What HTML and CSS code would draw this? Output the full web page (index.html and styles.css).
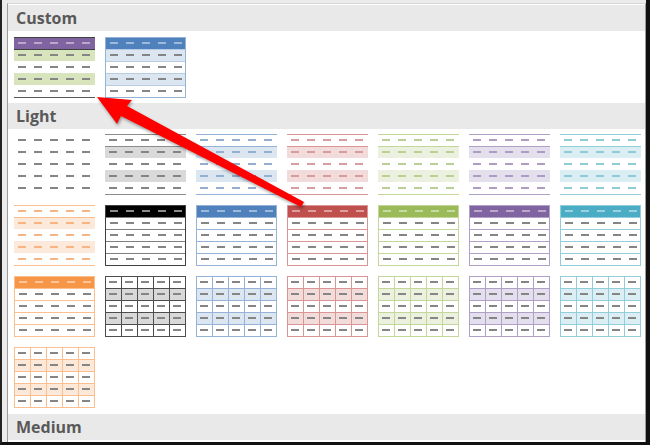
FILE: index.html
```html
<!DOCTYPE html>
<html>
<head>
<meta charset="utf-8">
<link rel="stylesheet" href="styles.css">
</head>
<body>
<div class="screen">
  <div class="panel">
    <div class="hdr hdr-first">Custom</div>
    <div class="gallery gallery-custom">
      <div class="t custA"><div class="r"></div><div class="r"></div><div class="r"></div><div class="r"></div><div class="r"></div></div>
      <div class="t custB"><div class="r"></div><div class="r"></div><div class="r"></div><div class="r"></div><div class="r"></div></div>
    </div>
    <div class="hdr">Light</div>
    <div class="gallery gallery-light">
      <div class="t plain"><div class="r"></div><div class="r"></div><div class="r"></div><div class="r"></div><div class="r"></div></div>
      <div class="t band gray"><div class="r"></div><div class="r"></div><div class="r"></div><div class="r"></div><div class="r"></div></div>
      <div class="t band blue"><div class="r"></div><div class="r"></div><div class="r"></div><div class="r"></div><div class="r"></div></div>
      <div class="t band red"><div class="r"></div><div class="r"></div><div class="r"></div><div class="r"></div><div class="r"></div></div>
      <div class="t band green"><div class="r"></div><div class="r"></div><div class="r"></div><div class="r"></div><div class="r"></div></div>
      <div class="t band purple"><div class="r"></div><div class="r"></div><div class="r"></div><div class="r"></div><div class="r"></div></div>
      <div class="t band teal"><div class="r"></div><div class="r"></div><div class="r"></div><div class="r"></div><div class="r"></div></div>

      <div class="t band orange"><div class="r"></div><div class="r"></div><div class="r"></div><div class="r"></div><div class="r"></div></div>
      <div class="t lines black"><div class="r"></div><div class="r"></div><div class="r"></div><div class="r"></div><div class="r"></div></div>
      <div class="t lines blue"><div class="r"></div><div class="r"></div><div class="r"></div><div class="r"></div><div class="r"></div></div>
      <div class="t lines red"><div class="r"></div><div class="r"></div><div class="r"></div><div class="r"></div><div class="r"></div></div>
      <div class="t lines green"><div class="r"></div><div class="r"></div><div class="r"></div><div class="r"></div><div class="r"></div></div>
      <div class="t lines purple"><div class="r"></div><div class="r"></div><div class="r"></div><div class="r"></div><div class="r"></div></div>
      <div class="t lines teal"><div class="r"></div><div class="r"></div><div class="r"></div><div class="r"></div><div class="r"></div></div>

      <div class="t lines orange"><div class="r"></div><div class="r"></div><div class="r"></div><div class="r"></div><div class="r"></div></div>
      <div class="t grid gray"><div class="r"></div><div class="r"></div><div class="r"></div><div class="r"></div><div class="r"></div></div>
      <div class="t grid blue"><div class="r"></div><div class="r"></div><div class="r"></div><div class="r"></div><div class="r"></div></div>
      <div class="t grid red"><div class="r"></div><div class="r"></div><div class="r"></div><div class="r"></div><div class="r"></div></div>
      <div class="t grid green"><div class="r"></div><div class="r"></div><div class="r"></div><div class="r"></div><div class="r"></div></div>
      <div class="t grid purple"><div class="r"></div><div class="r"></div><div class="r"></div><div class="r"></div><div class="r"></div></div>
      <div class="t grid teal"><div class="r"></div><div class="r"></div><div class="r"></div><div class="r"></div><div class="r"></div></div>

      <div class="t grid orange"><div class="r"></div><div class="r"></div><div class="r"></div><div class="r"></div><div class="r"></div></div>
    </div>
    <div class="hdr">Medium</div>
  </div>
  <svg class="arrow" width="650" height="445" viewBox="0 0 650 445">
    <polygon points="97,97 132,100 127,106 304,202 301,207 121,116 117,124" />
  </svg>
</div>
</body>
</html>
```
FILE: styles.css
```css
html, body {
  margin: 0;
  padding: 0;
  background: #ffffff;
}

.screen {
  position: relative;
  width: 650px;
  height: 445px;
  box-sizing: border-box;
  border-left: 2px solid #222222;
  border-right: 4px solid #111111;
  border-bottom: 3px solid #111111;
  background: #ebebeb;
  padding: 3px 0 0 5px;
  overflow: hidden;
}

.panel {
  height: 100%;
  box-sizing: border-box;
  border-left: 1px solid #9c9c9c;
  border-top: 1px solid #d6d6d6;
  border-right: 1px solid #9c9c9c;
  background: #ffffff;
  overflow: hidden;
}

.hdr {
  height: 26px;
  background: #e9e9e9;
  color: #595959;
  font-family: "Open Sans", "Liberation Sans", sans-serif;
  font-weight: 700;
  font-size: 16px;
  line-height: 27px;
  padding-left: 8px;
}

.hdr-first {
  margin-top: 1px;
}

.gallery {
  display: grid;
  grid-template-columns: repeat(7, 81px);
  column-gap: 10px;
  row-gap: 10px;
  padding: 5px 0 5px 6px;
}

.gallery-custom {
  padding-top: 6px;
}

.gallery-light {
  padding-bottom: 6px;
}

/* colour sets */
.gray   { --c: #8c8c8c; --f: #d9d9d9; --dc: #858585; --h: #000000; --hd: #8c8c8c; }
.black  { --c: #7f7f7f; --f: #d9d9d9; --dc: #858585; --h: #000000; --hd: #8c8c8c; }
.blue   { --c: #95b3d7; --f: #dce6f1; --dc: #94aed0; --h: #4f81bd; --hd: rgba(255,255,255,0.45); }
.red    { --c: #da9694; --f: #f2dcdb; --dc: #d69e9c; --h: #c0504d; --hd: rgba(255,255,255,0.45); }
.green  { --c: #c4d79b; --f: #ebf1de; --dc: #bccf98; --h: #9bbb59; --hd: rgba(255,255,255,0.45); }
.purple { --c: #b1a0c7; --f: #e4dfec; --dc: #ac9ec2; --h: #8064a2; --hd: rgba(255,255,255,0.45); }
.teal   { --c: #92cddc; --f: #daeef3; --dc: #92c9d7; --h: #4bacc6; --hd: rgba(255,255,255,0.45); }
.orange { --c: #fabf8f; --f: #fde9d9; --dc: #f6b585; --h: #f79646; --hd: rgba(255,255,255,0.45); }

/* table thumbnails */
.t {
  --d: #858585;
  width: 81px;
  height: 61px;
  box-sizing: border-box;
  border-top: 1px solid transparent;
  border-bottom: 1px solid transparent;
  display: flex;
  flex-direction: column;
}

.r {
  flex: none;
  height: 12px;
  box-sizing: border-box;
  border-top: 1px solid transparent;
  background-color: var(--rf, transparent);
  background-image:
    linear-gradient(90deg, transparent 4px, var(--rd, var(--d)) 4px, var(--rd, var(--d)) 12px, transparent 12px),
    var(--vl, linear-gradient(transparent, transparent));
  background-size: 16px 2px, 16px 100%;
  background-position: 0 4px, 0 0;
  background-repeat: repeat-x, repeat-x;
}

.r:first-child {
  height: 11px;
  border-top: 0;
}

/* banded light style */
.band {
  --d: var(--dc);
  border-top-color: var(--c);
  border-bottom-color: var(--c);
}
.band .r:nth-child(2) { border-top-color: var(--c); }
.band .r:nth-child(2),
.band .r:nth-child(4) { --rf: var(--f); }

/* header + row lines style */
.lines {
  border: 1px solid var(--c);
}
.lines .r + .r { border-top-color: var(--c); }
.lines .r:first-child { --rf: var(--h); --rd: var(--hd); }
.lines.black { border-color: #404040; }

/* full grid style */
.grid {
  border: 1px solid var(--c);
  --vl: linear-gradient(90deg, transparent 15px, var(--c) 15px);
}
.grid.gray { --c: #4d4d4d; }
.grid .r + .r { border-top-color: var(--c); }
.grid .r { background-position: -1px 4px, 0 0; }
.grid .r:nth-child(2),
.grid .r:nth-child(4) { --rf: var(--f); }

/* custom styles */
.custA {
  border-top-color: #3f3f3f;
  border-bottom-color: #595959;
}
.custA .r:first-child { --rf: #8064a2; --rd: rgba(255,255,255,0.45); }
.custA .r:nth-child(2) { border-top-color: #3f3f3f; }
.custA .r:nth-child(2),
.custA .r:nth-child(4) { --rf: #d8e4bc; }

.custB {
  border: 1px solid #95b3d7;
}
.custB .r + .r { border-top-color: #b8cce4; }
.custB .r:first-child { --rf: #4f81bd; --rd: rgba(255,255,255,0.45); }
.custB .r:nth-child(2),
.custB .r:nth-child(4) { --rf: #dce6f1; }

.arrow {
  position: absolute;
  left: -2px;
  top: 0;
  pointer-events: none;
  filter: drop-shadow(1px 2px 1.5px rgba(0,0,0,0.35));
}
.arrow polygon {
  fill: #ff0000;
}
```
